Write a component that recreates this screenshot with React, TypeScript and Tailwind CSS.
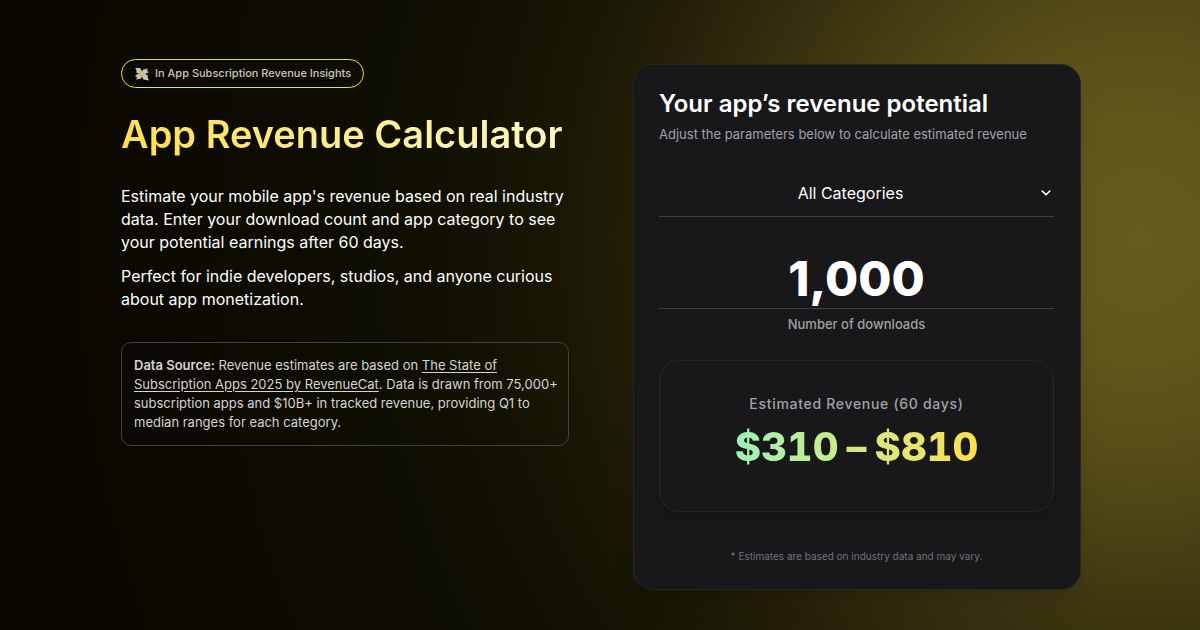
import { useState } from "react";

const categories = ["All Categories", "Business", "Education", "Gaming", "Health & Fitness", "Photo & Video"];

function Money() {
  return (
    <svg viewBox="0 0 16 16" className="size-4" aria-hidden="true">
      <g fill="#c6c3b6">
        <path d="M1.200 2 6 2 8.200 5.600 6.200 8 2.200 6.600 2.600 4.400Z" />
        <path d="M9.200 3.400 14 2.400 13 4.600 14.800 6.200 10.200 8.400 7.800 6Z" />
        <path d="M1 9.800 5 7.200 8 10 7 12.800 2 13.600 3.200 11.600Z" />
        <path d="M10 7.600 14 9.600 13.600 11.400 15 14.400 9.400 13.400 7.600 10Z" />
      </g>
      <path d="m8 5 2.800 2.800L8 10.800 5 7.900Z" fill="#d0ad50" />
      <path d="m8 6.500 1.300 1.300L8 9.300 6.700 7.900Z" fill="#eee3bb" />
    </svg>
  );
}

export default function App() {
  const [category, setCategory] = useState(categories[0]);
  const [downloads, setDownloads] = useState("1,000");

  return (
    <main className="flex min-h-screen justify-center bg-[#0b0802] bg-[radial-gradient(ellipse_100%_200%_at_95%_38%,#665b1c_0,#60561a_10%,#574d18_17%,#4b4315_23%,#3f3711_29%,#322c0d_35%,#231f08_42%,#181604_50%,#100f02_60%,#0d0b02_75%,#0b0802_90%)] pl-0.5 font-['Inter',sans-serif] text-white">
      <div className="grid w-full max-w-[960px] grid-cols-2 items-start gap-16">
        <section className="pt-[59px]">
          <div className="inline-flex h-[29px] items-center gap-[5px] rounded-full border border-[#f2dc50] px-3 text-[11px] font-medium text-[#c9c7b6]">
            <Money />
            <span>In App Subscription Revenue Insights</span>
          </div>
          <h1 className="mt-5 bg-linear-to-r from-[#fde047] to-[#fef9c3] bg-clip-text text-[38px] leading-[52px] font-semibold whitespace-nowrap text-transparent">
            App Revenue Calculator
          </h1>
          <div className="mt-[25px] space-y-[11px] text-base leading-[23px]">
            <p>
              Estimate your mobile app's revenue based on real industry data. Enter your download count and app category to see your potential earnings after 60 days.
            </p>
            <p>Perfect for indie developers, studios, and anyone curious about app monetization.</p>
          </div>
          <p className="mt-[31px] rounded-[10px] border border-[#3f3f46] py-[13px] pr-1 pl-3 text-[13px] leading-[19px] text-[#d4d4d4]">
            <strong className="font-semibold">Data Source:</strong> Revenue estimates are based on{" "}
            <a href="#report" className="underline underline-offset-2">
              The State of Subscription Apps 2025 by RevenueCat
            </a>
            . Data is drawn from 75,000+ subscription apps and $10B+ in tracked revenue, providing Q1 to median ranges for each category.
          </p>
        </section>

        <form className="mt-16 rounded-[20px] border border-[#27272a] bg-[#18181b] py-[25px] pr-[26px] pl-[25px] shadow-xl">
          <h2 className="text-2xl leading-7 font-semibold whitespace-nowrap">Your app’s revenue potential</h2>
          <p className="mt-[7px] text-[13px] leading-[18px] text-[#a1a1aa]">Adjust the parameters below to calculate estimated revenue</p>
          <div className="relative mt-[26px] border-b border-[#3f3f46]">
            <select
              aria-label="App category"
              value={category}
              onChange={(e) => setCategory(e.target.value)}
              className="h-[47px] w-full appearance-none bg-transparent pr-3 text-center text-base [text-align-last:center]"
            >
              {categories.map((c) => (
                <option key={c} className="text-black">{c}</option>
              ))}
            </select>
            <svg viewBox="0 0 10 6" className="pointer-events-none absolute top-[21px] right-[3px] h-[6px] w-[10px]" fill="none" stroke="white" strokeWidth="1.6" strokeLinecap="round" strokeLinejoin="round">
              <path d="m1.200 1 3.800 3.800L8.800 1" />
            </svg>
          </div>
          <input
            id="downloads"
            inputMode="numeric"
            value={downloads}
            onChange={(e) => setDownloads(e.target.value)}
            className="mt-8 h-[60px] w-full border-b border-[#3f3f46] bg-transparent text-center text-5xl font-extrabold outline-none"
          />
          <label htmlFor="downloads" className="mt-[6px] block text-center text-[13px] leading-[18px] font-medium text-[#a1a1a1]">
            Number of downloads
          </label>
          <div className="mt-[27px] flex h-[152px] flex-col items-center rounded-[20px] border border-[#27272a] pt-8 shadow-lg">
            <p className="text-sm leading-[22px] font-medium tracking-wider text-[#a1a1aa]">Estimated Revenue (60 days)</p>
            <output htmlFor="downloads" className="mt-2 flex gap-2 bg-linear-to-r from-[#9df0b4] to-[#fde047] bg-clip-text text-[40px] leading-[48px] font-extrabold text-transparent tabular-nums">
              <span>$310</span>
              <span>–</span>
              <span>$810</span>
            </output>
          </div>
          <p className="mt-9 text-center text-[10px] leading-4 text-[#71717a]">* Estimates are based on industry data and may vary.</p>
        </form>
      </div>
    </main>
  );
}
